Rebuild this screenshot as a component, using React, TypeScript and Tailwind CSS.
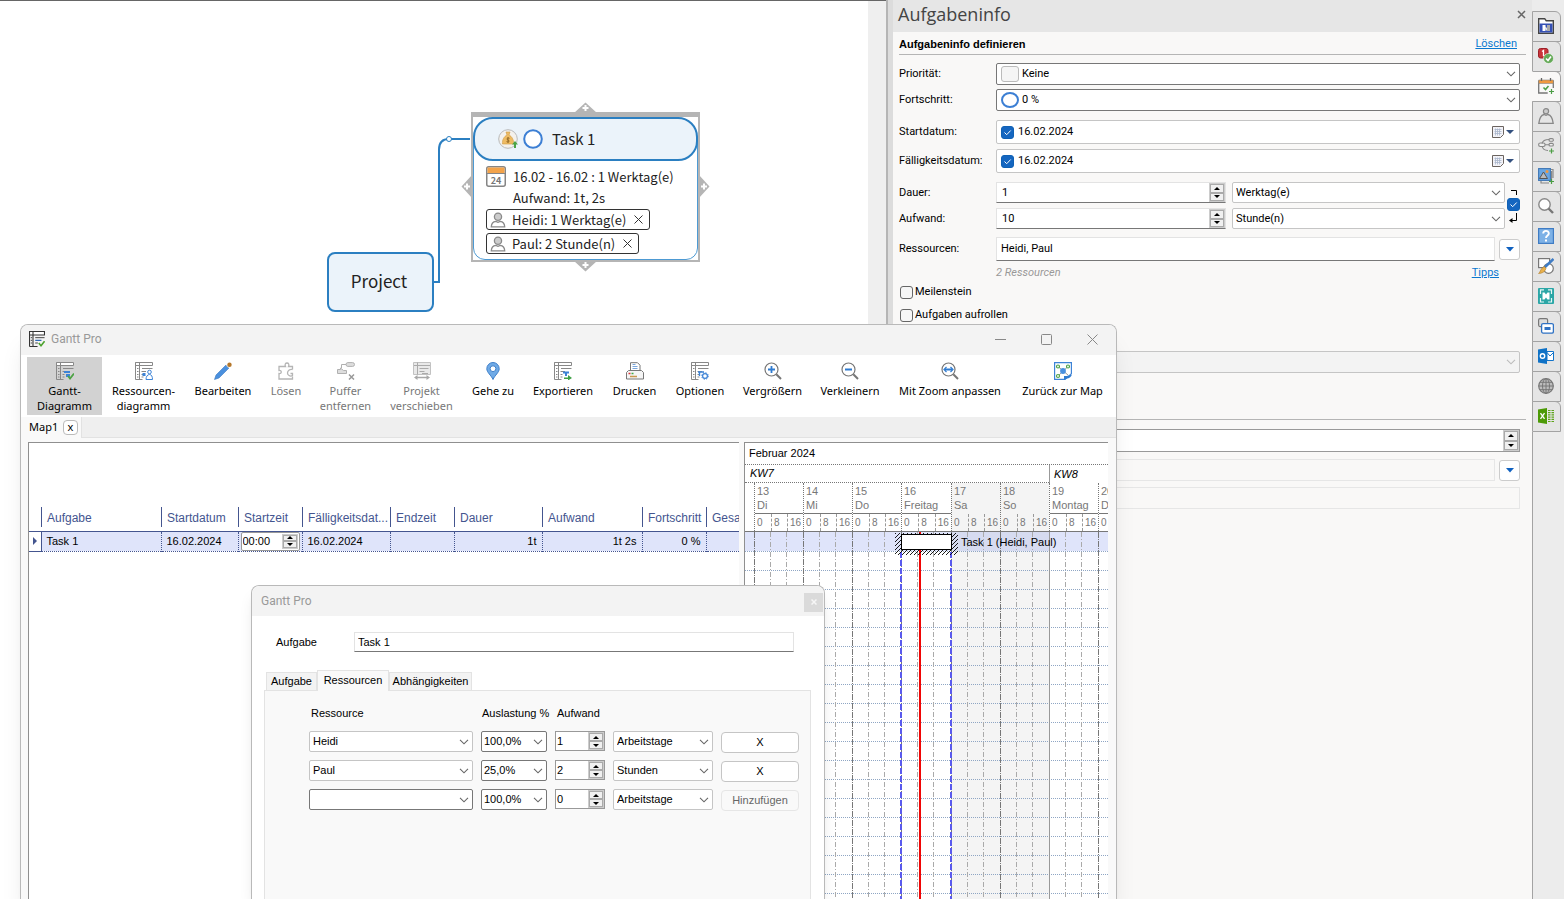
import React from "react";
import clsx from "clsx";

/* ---------- small shared controls ---------- */

const Chevron = ({ className, dim }: { className?: string; dim?: boolean }) => (
  <svg viewBox="0 0 10 6" className={clsx("pointer-events-none absolute top-1/2 h-[6px] w-[10px] -translate-y-1/2", className)}>
    <path d="M1 .8 5 4.8 9 .8" fill="none" stroke={dim ? "#bbb" : "#666"} strokeWidth="1.1" />
  </svg>
);

interface SelectBoxProps {
  label: string;
  value: string;
  className?: string;
  boxClass?: string;
  disabled?: boolean;
  children?: React.ReactNode;
}

const SelectBox = ({ label, value, className, boxClass, disabled, children }: SelectBoxProps) => (
  <div className={clsx("relative", className)}>
    <select
      aria-label={label}
      disabled={disabled}
      defaultValue={value}
      className={clsx("block h-full w-full appearance-none rounded-xs border pr-5", boxClass)}
    >
      <option value={value}>{value}</option>
    </select>
    {children}
    <Chevron className="right-1" dim={disabled} />
  </div>
);

const Spinner = ({ className }: { className?: string }) => (
  <div className={clsx("flex w-4 shrink-0 flex-col bg-[#ccc] p-px", className)}>
    <button aria-label="Mehr" className="flex flex-1 items-center justify-center border border-[#aaa] bg-[#f0f0f0]">
      <svg viewBox="0 0 6 3" className="h-[3px] w-[6px]"><path d="M0 3 3 0l3 3z" /></svg>
    </button>
    <button aria-label="Weniger" className="flex flex-1 items-center justify-center border border-[#aaa] bg-[#f0f0f0]">
      <svg viewBox="0 0 6 3" className="h-[3px] w-[6px]"><path d="M0 0h6L3 3z" /></svg>
    </button>
  </div>
);

const CheckBox = ({ id, label, checked }: { id?: string; label?: string; checked?: boolean }) => (
  <span className="relative block size-[13px] shrink-0">
    <input
      id={id}
      aria-label={label}
      type="checkbox"
      defaultChecked={checked}
      className="block size-[13px] appearance-none rounded-[3px] border border-[#666] bg-[#f6f6f6] checked:border-[#0f61b5] checked:bg-[#1566c0]"
    />
    {checked && (
      <svg viewBox="0 0 13 13" className="pointer-events-none absolute inset-0 size-[13px]">
        <path d="M3.5 6.5 5.7 8.7 9.7 4.5" fill="none" stroke="#fff" />
      </svg>
    )}
  </span>
);

/* ---------- mind map ---------- */

const PersonIcon = () => (
  <svg viewBox="0 0 16 16" className="size-4 shrink-0">
    <circle cx="8" cy="4.7" r="3.6" fill="#ccc" stroke="#8a8a8a" strokeWidth="1.3" />
    <path d="M1.3 14.8c.2-4 3-5.2 4.5-5.4l2.2 1 2.2-1c1.5.2 4.3 1.4 4.5 5.4z" fill="#fff" stroke="#8a8a8a" strokeWidth="1.3" />
  </svg>
);

const Chip = ({ text }: { text: string }) => (
  <div className="flex h-[21px] items-center rounded-[3px] border border-[#333] bg-white pl-[3px]">
    <PersonIcon />
    <span className="ml-1.5">{text}</span>
    <button aria-label="Entfernen" className="ml-1 mr-0.5 p-1">
      <svg viewBox="0 0 9 9" className="size-[9px]"><path d="M.5.5l8 8M8.5.5l-8 8" stroke="#333" fill="none" /></svg>
    </button>
  </div>
);

const Plus = ({ x, y }: { x: number; y: number }) => (
  <path d={`M${x - 3} ${y}h6M${x} ${y - 3}v6`} stroke="#fff" strokeWidth="2" />
);

const MapCanvas = () => (
  <main className="relative min-w-0 flex-1 overflow-hidden border-t border-[#666] bg-white font-['Noto_Sans_CJK_SC','Noto_Sans',sans-serif] text-[#222]">
    <svg className="absolute left-0 top-[-1px] h-[330px] w-[800px]" viewBox="0 0 800 330">
      <path d="M433 282h6v-132.500q0-10.500 10-10.500h21" fill="none" stroke="#2b7fc1" strokeWidth="2" />
      <circle cx="449" cy="139" r="2.5" fill="#fff" stroke="#2b7fc1" />
      <path d="M574 113 585.500 102.500 597 113zM574 261 585.500 271.500 597 261zM472 175 461.500 186.500 472 198zM699 175 709.500 186.500 699 198z" fill="#b5b5b5" />
      <Plus x={585.5} y={108} />
      <Plus x={585.5} y={265} />
      <Plus x={467} y={186.5} />
      <Plus x={704} y={186.5} />
    </svg>

    <div className="absolute left-[327px] top-[251px] flex h-[60px] w-[107px] items-center justify-center rounded-lg border-2 border-[#2b7fc1] bg-[#ebf3fa] pb-0.5 pr-[3px] text-[17px] leading-5">
      Project
    </div>

    <div className="absolute left-[471px] top-[111px] w-[229px] border-2 border-t-[5px] border-[#b5b5b5] bg-white">
      <div className="rounded-t-3xl rounded-b-xl border border-[#4d9ad3]">
        <div className="-mx-px -mt-px flex h-11 items-center rounded-[20px] border-2 border-[#2b7fc1] bg-[#ebf3fa] pl-[23px] text-[15px] leading-5">
          <svg viewBox="0 0 20 20" className="size-5">
            <circle cx="10" cy="10" r="9.3" fill="#f4f1ec" stroke="#b9b9b9" />
            <path d="M8 3h4l-1 3c3 1.5 5 5 4.5 9H4.500C4 11 6 7.5 9 6z" fill="#eebb63" stroke="#cf9a41" strokeWidth=".6" />
            <path d="M11.5 9.300c-2.500-1-3.500 1.200-1.500 1.700s1.500 2.700-1.500 1.600M10 8v6" fill="none" stroke="#8f6420" strokeWidth=".9" />
            <path d="M17 12l3 3.500h-2V19h-2v-3.500h-2z" fill="#4ba446" />
          </svg>
          <svg viewBox="0 0 20 20" className="ml-[5px] size-5"><circle cx="10" cy="10" r="8.8" fill="#fff" stroke="#3c7fd4" strokeWidth="2" /></svg>
          <span className="ml-[9px]">Task 1</span>
        </div>
        <div className="px-3 pb-[5px] pt-[5px] text-[13px] leading-[21px]">
          <div className="flex items-center">
            <svg viewBox="0 0 20 21" className="h-[21px] w-5">
              <rect x=".75" y=".75" width="18.5" height="19.5" rx="2" fill="#fff" stroke="#858585" strokeWidth="1.5" />
              <path d="M1.500 1.500h17V7h-17z" fill="#f3a34a" />
              <path d="M1 7.500h18" stroke="#858585" />
              <text x="10" y="17.5" fontSize="9" fontWeight="700" textAnchor="middle" fill="#777">24</text>
            </svg>
            <span className="ml-[7px]">16.02 - 16.02 : 1 Werktag(e)</span>
          </div>
          <div className="ml-[27px]">Aufwand: 1t, 2s</div>
          <div className="mt-px flex flex-col items-start gap-[3px] leading-4">
            <Chip text="Heidi: 1 Werktag(e)" />
            <Chip text="Paul: 2 Stunde(n)" />
          </div>
        </div>
      </div>
    </div>
  </main>
);

/* ---------- task info panel ---------- */

const PanelRow = ({ label, id, className, children }: { label: string; id?: string; className?: string; children: React.ReactNode }) => (
  <div className={clsx("flex items-center", className)}>
    <label htmlFor={id} className="w-[97px] shrink-0">{label}</label>
    {children}
  </div>
);

const DateBox = ({ id, label }: { id: string; label: string }) => (
  <div className="flex h-6 flex-1 items-center rounded-xs border border-[#c5c5c5] bg-white pl-1 pr-[5px]">
    <CheckBox checked label={`${label} aktiv`} />
    <input id={id} defaultValue="16.02.2024" className="ml-1 min-w-0 flex-1" />
    <button aria-label={`${label} wählen`} className="flex items-center gap-0.5">
      <svg viewBox="0 0 12 12" className="size-3">
        <path d="M.5.5h11v8l-3 3h-8z" fill="#f3f3f8" stroke="#6b6460" />
        <path d="M2.500 3.500h7M2.500 5.500h7M2.500 7.500h7M3.500 2.500v7M5.500 2.500v7M7.500 2.500v7" stroke="#a9b6cc" strokeWidth=".8" />
      </svg>
      <svg viewBox="0 0 8 4" className="h-1 w-2"><path d="M0 0h8L4 4z" fill="#33507f" /></svg>
    </button>
  </div>
);

const NumberBox = ({ id, value }: { id: string; value: string }) => (
  <div className="flex h-[21px] w-[230px] shrink-0 border border-[#e3e3e3] border-b-[#777] bg-white">
    <input id={id} defaultValue={value} className="min-w-0 flex-1 pl-[5px]" />
    <Spinner />
  </div>
);

const DropButton = () => (
  <button aria-label="Auswählen" className="ml-1 flex h-[21px] w-[21px] shrink-0 items-center justify-center rounded-[3px] border border-[#ccc] bg-white">
    <svg viewBox="0 0 8 5" className="h-[5px] w-2"><path d="M0 0h8L4 4.500z" fill="#0f61c0" /></svg>
  </button>
);

const TaskPanel = () => (
  <aside className="flex w-[639px] shrink-0 flex-col bg-[#f9f8f7] font-[Roboto,sans-serif] text-[11px] leading-4 text-black">
    <header className="flex h-8 shrink-0 items-center justify-between bg-[#e6e6e6] pb-1 pl-[5px] pr-1.5">
      <h1 className="font-['Open_Sans',sans-serif] text-[18px] text-[#444]">Aufgabeninfo</h1>
      <button aria-label="Schließen">
        <svg viewBox="0 0 9 9" className="size-[9px]"><path d="M1 1l7 7M8 1 1 8" stroke="#666" strokeWidth="1.5" /></svg>
      </button>
    </header>
    <div className="mx-1.5 flex h-[23px] shrink-0 items-end justify-between border-b border-[#b5b5b5] pb-0.5 pr-[9px]">
      <h2 className="font-['Liberation_Sans',Arial,sans-serif] font-bold">Aufgabeninfo definieren</h2>
      <a href="#" className="text-[#0b78d0] underline">Löschen</a>
    </div>
    <div className="flex flex-col pl-1.5 pr-3">
      <PanelRow label="Priorität:" className="mt-2">
        <SelectBox label="Priorität" value="Keine" className="h-[22px] flex-1" boxClass="border-[#777] bg-white pl-[25px]">
          <span className="absolute left-[5px] top-[3px] h-4 w-[18px] rounded-[3px] border border-[#bbb] bg-[#f5f5f5]" />
        </SelectBox>
      </PanelRow>
      <PanelRow label="Fortschritt:" className="mt-1">
        <SelectBox label="Fortschritt" value="0 %" className="h-[22px] flex-1" boxClass="border-[#777] bg-white pl-[25px]">
          <span className="absolute left-[5px] top-[3px] h-4 w-[18px] rounded-[50%] border-2 border-[#3c7fd4] bg-white" />
        </SelectBox>
      </PanelRow>
      <PanelRow label="Startdatum:" id="start" className="mt-[9px]">
        <DateBox id="start" label="Startdatum" />
      </PanelRow>
      <PanelRow label="Fälligkeitsdatum:" id="due" className="mt-[5px]">
        <DateBox id="due" label="Fälligkeitsdatum" />
      </PanelRow>
      <div className="relative mt-[9px] pr-[15px]">
        <PanelRow label="Dauer:" id="dauer">
          <NumberBox id="dauer" value="1" />
          <SelectBox label="Einheit Dauer" value="Werktag(e)" className="ml-1.5 h-[21px] flex-1" boxClass="border-[#c5c5c5] bg-white pl-[3px]" />
        </PanelRow>
        <PanelRow label="Aufwand:" id="aufwand" className="mt-[5px]">
          <NumberBox id="aufwand" value="10" />
          <SelectBox label="Einheit Aufwand" value="Stunde(n)" className="ml-1.5 h-[21px] flex-1" boxClass="border-[#c5c5c5] bg-white pl-[3px]" />
        </PanelRow>
        <div className="absolute right-0 top-[7px] flex w-[13px] flex-col items-center gap-0.5">
          <svg viewBox="0 0 13 7" className="h-[7px] w-[13px]"><path d="M4 1.500h5.500V6" fill="none" stroke="#000" /></svg>
          <CheckBox checked label="Dauer und Aufwand verknüpfen" />
          <svg viewBox="0 0 13 10" className="h-[10px] w-[13px]"><path d="M9.500 0v7.500H4" fill="none" stroke="#000" /><path d="M2 7.500 5.500 5v5z" /></svg>
        </div>
      </div>
      <PanelRow label="Ressourcen:" id="res" className="mt-2">
        <input id="res" defaultValue="Heidi, Paul" className="h-6 min-w-0 flex-1 border border-[#e3e3e3] border-b-[#777] bg-white px-1 pb-0.5" />
        <DropButton />
      </PanelRow>
      <div className="ml-[97px] mr-[21px] mt-1 flex justify-between">
        <i className="text-[#999]">2 Ressourcen</i>
        <a href="#" className="text-[#0b78d0] underline">Tipps</a>
      </div>
      <div className="mt-[3px] flex items-center gap-0.5 pl-px">
        <CheckBox id="milestone" /><label htmlFor="milestone">Meilenstein</label>
      </div>
      <div className="mt-[7px] flex items-center gap-0.5 pl-px">
        <CheckBox id="rollup" /><label htmlFor="rollup">Aufgaben aufrollen</label>
      </div>
      <SelectBox disabled label="Kalender" value="" className="ml-[97px] mt-[28px] h-[22px]" boxClass="border-[#c5c5c5] bg-[#f3f3f3]" />
    </div>
    <div className="mx-1.5 mt-[46px] border-b border-[#b5b5b5]" />
    <div className="flex flex-col pl-[103px] pr-3">
      <div className="mt-[9px] flex h-[23px] border border-[#999] bg-white">
        <input aria-label="Kosten" className="min-w-0 flex-1" />
        <Spinner />
      </div>
      <div className="mt-[7px] flex items-center">
        <input aria-label="Kostenart" disabled className="h-[22px] min-w-0 flex-1 border border-[#e6e6e6]" />
        <DropButton />
      </div>
      <input aria-label="Summe" disabled className="mt-1.5 h-[22px] border border-[#e6e6e6]" />
    </div>
  </aside>
);

/* ---------- side tabs ---------- */

const sideTabs: { name: string; icon: React.ReactNode }[] = [
  { name: "Bibliothek", icon: <><path d="M.7 15.300V.7h6l1.500 2h7.100v12.600z" fill="#fff" stroke="#444" strokeWidth="1.4" /><path d="M1.500 5.500h13v9h-13z" fill="#3550b5" /><path d="M4.500 7h3v6h-3z" fill="#fff" /><path d="M9 7h3v6H9z" fill="#aaa" /><path d="M7 8.500 9 10v3L7 11z" fill="#e5e5e5" /></> },
  { name: "Marker", icon: <><rect x=".5" y=".5" width="9.500" height="9.500" rx="2" fill="#c9353b" stroke="#9c2027" /><path d="M4 3.500 5.500 2.500v5.500" stroke="#fff" fill="none" strokeWidth="1.3" /><circle cx="10.500" cy="10.500" r="5" fill="#64a957" stroke="#fff" strokeWidth=".6" /><path d="M8 10.500l2 2 3-4" fill="none" stroke="#fff" strokeWidth="1.6" /></> },
  { name: "Aufgabeninfo", icon: <><path d="M.7 2.500V15h9" fill="none" stroke="#777" strokeWidth="1.3" /><path d="M15.300 2.500V10" stroke="#777" strokeWidth="1.3" /><path d="M.7 2h14.600v3.500H.7z" fill="#f0993d" stroke="#888" strokeWidth=".6" /><path d="M3.500 0v3M12.500 0v3" stroke="#666" strokeWidth="1.3" /><path d="M5.500 9.500l2 2 3-3.500" fill="none" stroke="#4c9e45" strokeWidth="1.6" /><path d="M13.500 11v5M11 13.500h5" stroke="#4c9e45" strokeWidth="1.2" /></> },
  { name: "Ressourcen", icon: <><circle cx="8" cy="3.2" r="2.6" fill="#ccc" stroke="#888" strokeWidth="1.2" /><path d="M.8 15.300C1.500 9.500 4 7 6 6.500l2 .8 2-.8c2 .5 4.500 3 5.200 8.800z" fill="none" stroke="#888" strokeWidth="1.3" /></> },
  { name: "Zweige", icon: <><g fill="#eee" stroke="#888" strokeWidth="1.1"><rect x=".6" y="5" width="6.500" height="3.500" rx="1.700" /><path d="M7 6.700h4M4 5.500q1-4 7-4M4 8q1 4.500 6 4.500" fill="none" /><rect x="11" y=".6" width="4.400" height="2.600" rx="1.300" /><rect x="11" y="5.400" width="4.400" height="2.600" rx="1.300" /></g><path d="M13.500 10.500v5M11 13h5" stroke="#4c9e45" strokeWidth="1.2" /></> },
  { name: "Bilder", icon: <><path d="M13 1.500h2V10M3 13v2h8M13.500 3V11" fill="none" stroke="#888" strokeWidth="1.2" /><rect x=".6" y=".6" width="11.800" height="11.800" fill="#69a6e3" stroke="#3f77b5" strokeWidth="1.1" /><path d="M1.500 10.500 5.500 4l4 6.500z" fill="#bbb" stroke="#555" /><circle cx="9" cy="3.500" r="1.500" fill="#f0993d" /><path d="M13.500 11v5M11 13.500h5" stroke="#4c9e45" strokeWidth="1.2" /></> },
  { name: "Suche", icon: <><circle cx="6.500" cy="6.500" r="5.700" fill="#fdfdfd" stroke="#888" strokeWidth="1.4" /><path d="M10.500 10.500 15 15" stroke="#777" strokeWidth="2.4" /></> },
  { name: "Hilfe", icon: <><rect x=".6" y=".6" width="14.800" height="14.800" fill="#7db1e6" stroke="#3f7cc4" strokeWidth="1.2" /><path d="M5.200 5.500c0-3.500 5.600-3.500 5.600 0 0 2-2.800 2-2.800 4.500" fill="none" stroke="#fff" strokeWidth="1.9" /><path d="M7 11.500h2v2H7z" fill="#fff" /></> },
  { name: "Stile", icon: <><rect x=".6" y=".6" width="11" height="9" fill="#fff" stroke="#777" strokeWidth="1.2" /><circle cx="10.500" cy="10.500" r="4.800" fill="#fff" stroke="#777" strokeWidth="1.2" /><path d="M15.500 1 6.500 9.500" stroke="#3f7cc4" strokeWidth="2.6" /><path d="M6.500 8.500 8 10.500C7 14 4 15.500.5 15.500c2-1.500 2-5.500 6-7z" fill="#e8b04b" stroke="#a87422" strokeWidth=".5" /></> },
  { name: "Snap", icon: <><rect width="16" height="16" rx="1" fill="#2ba6a6" /><path d="M6 1.800H2.500V6M10 1.800h3.500V6M13.500 10v4H10M6 14H2.500v-4" fill="none" stroke="#e6f6f6" strokeWidth="1.2" /><path d="M4.500 4.500h2l1.500 2 1.500-2h2v7h-2l-1.500-2-1.500 2h-2z" fill="#fff" /></> },
  { name: "Fenster", icon: <><rect x=".6" y=".6" width="9" height="8" rx="1.500" fill="#ddd" stroke="#777" strokeWidth="1.2" /><rect x="3.600" y="5.600" width="11.800" height="9.500" rx="1.500" fill="#fff" stroke="#2f72c4" strokeWidth="1.3" /><path d="M6.500 9h6v3h-6z" fill="#2f72c4" /></> },
  { name: "Outlook", icon: <><path d="M9 3.500h6.500v9H9z" fill="#fff" stroke="#1273c9" /><path d="M9 4.500 12 8l3.500-3.500" fill="none" stroke="#1273c9" /><path d="M0 1.500 9 0v16l-9-1.500z" fill="#0f72c6" /><circle cx="4.500" cy="8" r="2.200" fill="none" stroke="#fff" strokeWidth="1.4" /></> },
  { name: "Web", icon: <><circle cx="8" cy="8" r="7.300" fill="#bdbdbd" stroke="#777" strokeWidth="1.2" /><path d="M.7 8h14.600M8 .7v14.600M2 4.300h12M2 11.700h12" stroke="#777" fill="none" /><ellipse cx="8" cy="8" rx="3.500" ry="7.300" fill="none" stroke="#777" /></> },
  { name: "Excel", icon: <><path d="M0 1.500 9 0v16l-9-1.500z" fill="#4c9a06" /><path d="M2.500 5.200 6.500 10.800M6.500 5.200 2.500 10.800" stroke="#fff" strokeWidth="1.3" /><path d="M10 2.500h6M10 4.700h6M10 6.900h6M10 9.100h6M10 11.300h6M10 13.500h6" stroke="#5da319" strokeWidth="1.2" strokeDasharray="2.500 1" /></> },
];

const SideTabs = () => (
  <nav className="flex w-8 shrink-0 flex-col bg-[#ececec] pt-[11px]">
    {sideTabs.map((tab) => (
      <button
        key={tab.name}
        aria-label={tab.name}
        className={clsx(
          "-mb-px mr-[3px] flex h-[31px] items-center justify-center rounded-tr-md border border-[#a3a3a3] pb-0.5 pr-0.5",
          tab.name === "Aufgabeninfo" ? "border-l-transparent bg-[#f9f8f7]" : "bg-[#e5e5e5]"
        )}
      >
        <svg viewBox="0 0 16 16" className="size-4">{tab.icon}</svg>
      </button>
    ))}
    <div className="mt-px flex-1 border-l border-[#a3a3a3]" />
  </nav>
);

/* ---------- Gantt window ---------- */

const SheetIcon = ({ dim, children }: { dim?: boolean; children?: React.ReactNode }) => (
  <svg viewBox="0 0 18 18" className="size-[18px]">
    <path d="M.5.5h17v3H.5z" fill={dim ? "#eee" : "#fff"} stroke={dim ? "#bbb" : "#888"} />
    <path d="M.5.5V17.500M4.500.5v17M.5 17.500h7M7 6.500h10.500M2 6.500h1.500M2 9.500h1.500M2 12.500h1.500M2 15h1.500M6.500 9.500H11M6.500 12.500h2M6.500 15h2" fill="none" stroke={dim ? "#bbb" : "#888"} />
    {children}
  </svg>
);

const Lens = ({ children }: { children: React.ReactNode }) => (
  <svg viewBox="0 0 18 18" className="size-[18px]">
    <circle cx="7.500" cy="7.500" r="6.500" fill="#fff" stroke="#777" strokeWidth="1.2" />
    <path d="M12.300 12.300 17 17" stroke="#777" strokeWidth="2" />
    <g stroke="#2f7bd0" strokeWidth="1.8" fill="none">{children}</g>
  </svg>
);

const tools: { lines: string[]; active?: boolean; disabled?: boolean; icon: React.ReactNode }[] = [
  { lines: ["Gantt-", "Diagramm"], active: true, icon: <SheetIcon><path d="M8 9h6v2H8zM10 12h4v3h-4z" fill="#3d83d6" /><path d="M12 14l2 2.500 4-5" fill="none" stroke="#4ea345" strokeWidth="1.8" /></SheetIcon> },
  { lines: ["Ressourcen-", "diagramm"], icon: <SheetIcon><path d="M7.500 11h3v3h-3z" fill="#3d83d6" /><circle cx="14.500" cy="10" r="1.800" fill="#fff" stroke="#3d83d6" /><path d="M11 17.500c0-3 1.500-5 3.500-5s3 2 3 5z" fill="#fff" stroke="#3d83d6" /></SheetIcon> },
  { lines: ["Bearbeiten"], icon: <svg viewBox="0 0 18 18" className="size-[18px]"><path d="M.5 17.500 2 13 12 3l3 3L5 16z" fill="#4a90de" stroke="#3a79c2" strokeWidth=".6" /><path d="M12 3.500 13 2.500l2.500 2.500-1 1z" fill="#ddd" /><circle cx="15.500" cy="2.700" r="2.200" fill="#b5772a" /></svg> },
  { lines: ["Lösen"], disabled: true, icon: <svg viewBox="0 0 18 18" className="size-[18px]"><path d="M15.500 7.500V4.500h-4c1-2 0-3.500-1.500-3.500S7.500 2.500 8.500 4.500h-6.500v4c3-.8 3 3.800 0 3v5.500h13.500v-2.500M15.500 7.500c-3-.5-5 1.500-5 3.500s2.500 4 5 2.500v-2h-2" fill="none" stroke="#b5b5b5" strokeWidth="1.3" /></svg> },
  { lines: ["Puffer", "entfernen"], disabled: true, icon: <svg viewBox="0 0 18 18" className="size-[18px]"><g fill="#ddd" stroke="#b0b0b0"><rect x="9" y=".6" width="8.500" height="3.800" rx="1.900" /><path d="M.5 7.500h3V6l3 2.500h3v3h-9z" /><path d="M9 2.500H4.500V6" fill="none" /></g><path d="M12 12.500l5 5M17 12.500l-5 5" stroke="#999" strokeWidth="1.5" /></svg> },
  { lines: ["Projekt", "verschieben"], disabled: true, icon: <svg viewBox="0 0 18 18" className="size-[18px]"><path d="M.5.5h17v12H.5z" fill="#e9e9e9" stroke="#c2c2c2" /><path d="M1 3.500h16M4.500.5v12M6.500 6.500h9M6.500 9.500h5M9 11.500h6" stroke="#aaa" fill="none" /><path d="M1 15.500 4.500 13v1.800h9V13l3.500 2.500-3.500 2.500v-1.800h-9V18z" fill="#a8a8a8" /></svg> },
  { lines: ["Gehe zu"], icon: <svg viewBox="0 0 18 18" className="size-[18px]"><path d="M9 17.500C7 13 2.800 10.500 2.800 6.700a6.200 6.200 0 0 1 12.400 0C15.200 10.500 11 13 9 17.500z" fill="#6faae6" stroke="#3f7fc9" /><circle cx="9" cy="6.700" r="2.900" fill="#fff" stroke="#3f7fc9" /></svg> },
  { lines: ["Exportieren"], icon: <SheetIcon><path d="M9 9.500h6v2H9zM11 11h2v3h-2z" fill="#3d83d6" /><path d="M10 15.500h4v-2.500l4 3-4 2.500v-1.500h-4z" fill="#3fa046" /></SheetIcon> },
  { lines: ["Drucken"], icon: <svg viewBox="0 0 18 18" className="size-[18px]"><path d="M4.500 8.500V.7h7l2.500 2.500v5.300" fill="#fff" stroke="#777" /><path d="M6.500 2.500h3M6.500 4.500h5M6.500 6.500h5" stroke="#7aa7dd" /><path d="M2.500 8.500h13l2 2v6.500H.5v-6.500z" fill="#f5f5f5" stroke="#777" /><path d="M2.500 11.500h2" stroke="#d33" strokeWidth="1.4" /><path d="M5.500 11.500h2" stroke="#4a4" strokeWidth="1.4" /><path d="M4 14.500h7" stroke="#c9974e" strokeWidth="1.4" /></svg> },
  { lines: ["Optionen"], icon: <SheetIcon><path d="M7 10h6M8.500 10v4" stroke="#3d83d6" strokeWidth="1.4" /><circle cx="14" cy="14" r="2.400" fill="#fff" stroke="#3d83d6" strokeWidth="1.2" /><circle cx="14" cy="14" r="3.300" fill="none" stroke="#3d83d6" strokeDasharray="1.300 1.300" /></SheetIcon> },
  { lines: ["Vergrößern"], icon: <Lens><path d="M4 7.500h7M7.500 4v7" /></Lens> },
  { lines: ["Verkleinern"], icon: <Lens><path d="M4 7.500h7" /></Lens> },
  { lines: ["Mit Zoom anpassen"], icon: <Lens><path d="M4 7.500h7" /><path d="M5.500 5 3 7.500 5.500 10M9.500 5 12 7.500 9.500 10" strokeWidth="1.2" /></Lens> },
  { lines: ["Zurück zur Map"], icon: <svg viewBox="0 0 18 18" className="size-[18px]"><path d="M.6.6h16.800v11L11 17.400H.6z" fill="#fff" stroke="#3d83d6" strokeWidth="1.2" /><path d="M4 4.500 14 13M14 4.500 4 14" stroke="#999" /><g fill="#fff" stroke="#4ea345" strokeWidth="1.2"><circle cx="4" cy="4.500" r="1.500" /><circle cx="14" cy="4.500" r="1.500" /><circle cx="4" cy="14" r="1.500" /></g><circle cx="9" cy="9" r="2.900" fill="#4a90de" /><path d="M10 18v-4l2.500 0C14.500 14 15.500 13 18 12.500c-1 2.500-3 4-5 4z" fill="#2f7bd0" /></svg> },
];

const columns = [
  { name: "Aufgabe", value: "Task 1" },
  { name: "Startdatum", value: "16.02.2024" },
  { name: "Startzeit", value: "00:00" },
  { name: "Fälligkeitsdat...", value: "16.02.2024" },
  { name: "Endzeit", value: "" },
  { name: "Dauer", value: "1t", right: true },
  { name: "Aufwand", value: "1t 2s", right: true },
  { name: "Fortschritt", value: "0 %", right: true },
  { name: "Gesamt", value: "" },
];

const TaskTable = () => (
  <div className="min-w-0 flex-1 overflow-hidden border-l border-t border-[#8f8f8f] bg-white">
    <table className="w-full table-fixed border-collapse">
      <colgroup>
        <col className="w-[12px]" />
        <col className="w-[120px]" />
        <col className="w-[77px]" />
        <col className="w-[64px]" />
        <col className="w-[88px]" />
        <col className="w-[64px]" />
        <col className="w-[88px]" />
        <col className="w-[100px]" />
        <col className="w-[64px]" />
        <col />
      </colgroup>
      <thead>
        <tr className="h-[88px] border-b border-[#44558f] align-bottom text-xs text-[#44558f]">
          <th />
          {columns.map((c) => (
            <th key={c.name} className="overflow-hidden whitespace-nowrap pb-1 text-left font-normal">
              <div className="h-5 border-l border-[#44558f] pl-[5px] leading-[22px]">{c.name}</div>
            </th>
          ))}
        </tr>
      </thead>
      <tbody>
        <tr className="h-5 border-b border-dotted border-[#44558f] bg-[#dfe4fa]">
          <td className="border-b border-r border-solid border-[#44558f] bg-white pl-1">
            <svg viewBox="0 0 4 8" className="h-2 w-1"><path d="M0 0l4 4-4 4z" fill="#44558f" /></svg>
          </td>
          {columns.map((c) => (
            <td key={c.name} className={clsx("border-l border-dotted border-[#44558f] px-[5px] leading-4", c.right && "text-right")}>
              {c.name === "Startzeit" ? (
                <div className="-mx-[3px] flex h-[19px] rounded-xs border border-[#999] bg-white p-px">
                  <input aria-label="Startzeit" defaultValue={c.value} className="min-w-0 flex-1" />
                  <Spinner />
                </div>
              ) : (
                c.value
              )}
            </td>
          ))}
        </tr>
      </tbody>
    </table>
  </div>
);

const days = [
  { day: "13", name: "Di", x: 9 },
  { day: "14", name: "Mi", x: 58 },
  { day: "15", name: "Do", x: 107 },
  { day: "16", name: "Freitag", x: 156, wide: true },
  { day: "17", name: "Sa", x: 206, weekend: true },
  { day: "18", name: "So", x: 255, weekend: true },
  { day: "19", name: "Montag", x: 304 },
  { day: "20", name: "Di", x: 353 },
];

const rowY = Array.from({ length: 19 }, (_, i) => 20 + i * 19);

const Timeline = () => (
  <div className="relative flex w-[364px] shrink-0 flex-col overflow-hidden border-l border-t border-[#8f8f8f] bg-white">
    <div className="h-[22px] shrink-0 border-b border-dotted border-[#777] pl-1 leading-[21px]">Februar 2024</div>
    <div className="flex h-[18px] shrink-0 text-[11px] italic leading-4">
      <div className="w-[304px] shrink-0 border-b border-dotted border-[#777] pl-[5px]">KW7</div>
      <div className="flex-1 border-l border-[#999] pl-1 leading-[18px]">KW8</div>
    </div>
    <div className="flex h-[49px] shrink-0 border-b border-[#777] text-[#777]">
      <div className="w-[9px] shrink-0" />
      {days.map((d) => (
        <div key={d.day} className={clsx("shrink-0 border-l border-dotted border-[#777]", d.wide ? "w-[50px]" : "w-[49px]", d.weekend && "bg-[#f4f4f4]")}>
          <div className={clsx("h-[31px] pl-0.5 pt-px leading-[14px]", !d.weekend && "border-b border-[#777]")}>
            <div>{d.day}</div>
            <div>{d.name}</div>
          </div>
          <div className="grid grid-cols-3 text-[10px] leading-[17px]">
            <span className="pl-0.5">0</span>
            <span className="border-l border-dashed border-[#999] pl-0.5">8</span>
            <span className="border-l border-dashed border-[#999] pl-0.5">16</span>
          </div>
        </div>
      ))}
    </div>
    <svg className="min-h-0 w-full flex-1" viewBox="0 0 363 367" preserveAspectRatio="xMinYMin slice">
      <defs>
        <pattern id="hatch" width="4" height="4" patternUnits="userSpaceOnUse">
          <path d="M-1 1 1-1M0 4 4 0M3 5 5 3" stroke="#000" strokeWidth=".9" />
        </pattern>
      </defs>
      <rect x="206" y="0" width="98" height="367" fill="#f4f4f4" />
      <rect x="0" y="0" width="363" height="19" fill="#dfe4fa" />
      <rect x="206" y="0" width="98" height="19" fill="#d6dbf0" />
      {rowY.map((y) => (
        <path key={y} d={`M0 ${y - 0.5}H363`} stroke="#8fa6c4" strokeDasharray="1 1" />
      ))}
      {days.map((d) => (
        <g key={d.day} fill="none">
          <path d={`M${d.x + 0.5} 0V367`} stroke="#777" strokeDasharray="6 1 1 1" />
          <path d={`M${d.x + 16.5} 0V367M${d.x + 32.5} 0V367`} stroke="#aaa" strokeDasharray="5 2 1 2" />
        </g>
      ))}
      <path d="M304.500 0V367" stroke="#999" />
      <path d="M156 20V367M206 20V367" stroke="#5a5aee" strokeWidth="2" strokeDasharray="6 2" />
      <path d="M175 0V367" stroke="#f00505" strokeWidth="2" />
      <path d="M150 1h63v22h-63z" fill="url(#hatch)" />
      <rect x="156.500" y="2.500" width="50" height="15" fill="#fff" stroke="#000" />
    </svg>
    <div className="absolute left-[216px] top-[91px] leading-4">Task 1 (Heidi, Paul)</div>
  </div>
);

const resources = [
  { name: "Heidi", load: "100,0%", effort: "1", unit: "Arbeitstage", action: "X" },
  { name: "Paul", load: "25,0%", effort: "2", unit: "Stunden", action: "X" },
  { name: "", load: "100,0%", effort: "0", unit: "Arbeitstage", action: "Hinzufügen" },
];

const TaskDialog = () => (
  <section className="absolute bottom-0 left-[230px] top-[260px] flex w-[574px] flex-col rounded-t-lg border border-b-0 border-[#b9b9b9] bg-white shadow-lg">
    <header className="flex h-[30px] shrink-0 items-center justify-between rounded-t-lg bg-[#f3f3f3] pl-[9px] pr-px">
      <span className="font-[Roboto,sans-serif] text-xs text-[#999]">Gantt Pro</span>
      <button aria-label="Schließen" className="mt-0.5 flex h-[19px] w-[19px] items-center justify-center bg-[#dadada]">
        <svg viewBox="0 0 6 6" className="size-1.5"><path d="M.5.5l5 5M5.500.5l-5 5" stroke="#f6f6f6" strokeWidth="1.5" /></svg>
      </button>
    </header>
    <div className="mr-[30px] mt-4 flex h-5 shrink-0 items-center pl-6">
      <label htmlFor="task-name" className="w-[78px]">Aufgabe</label>
      <input id="task-name" defaultValue="Task 1" className="h-5 min-w-0 flex-1 border border-[#e3e3e3] border-b-[#777] px-[3px]" />
    </div>
    <div className="ml-3.5 mt-[18px] flex h-5 shrink-0 items-end" role="tablist">
      <button role="tab" className="h-[18px] w-[51px] border border-b-0 border-[#e3e3e3] bg-[#f3f3f3]">Aufgabe</button>
      <button role="tab" aria-selected="true" className="relative z-10 -mb-px h-[21px] w-[72px] border border-b-0 border-[#e3e3e3] bg-[#f9f9f9] pb-0.5">Ressourcen</button>
      <button role="tab" className="h-[18px] w-[83px] border border-b-0 border-[#e3e3e3] bg-[#f3f3f3]">Abhängigkeiten</button>
    </div>
    <div className="ml-3 mr-[13px] flex-1 border border-b-0 border-[#e3e3e3] bg-[#f9f9f9] pl-11 pt-3.5">
      <div className="grid grid-cols-[164px_66px_50px_100px_78px] gap-x-2 whitespace-nowrap leading-4">
        <span className="pl-0.5">Ressource</span>
        <span className="pl-px">Auslastung %</span>
        <span className="pl-0.5">Aufwand</span>
      </div>
      <div className="mt-2.5 flex flex-col gap-2">
        {resources.map((r, i) => (
          <div key={i} className="grid h-[21px] grid-cols-[164px_66px_50px_100px_78px] gap-x-2">
            <SelectBox label="Ressource" value={r.name} className="h-[21px]" boxClass={clsx("bg-white pl-[3px]", r.name ? "border-[#c5c5c5]" : "border-[#777]")} />
            <SelectBox label="Auslastung" value={r.load} className="h-[21px]" boxClass="border-[#777] bg-white pl-0.5" />
            <div className="flex h-5 border border-[#999] bg-white">
              <input aria-label="Aufwand" defaultValue={r.effort} className="min-w-0 flex-1 pl-px" />
              <Spinner />
            </div>
            <SelectBox label="Einheit" value={r.unit} className="h-[21px]" boxClass="border-[#c5c5c5] bg-white pl-[3px]" />
            <button
              disabled={!r.name}
              className={clsx("mt-px h-[21px] rounded-sm border", r.name ? "border-[#c5c5c5] bg-white" : "border-[#e6e6e6] bg-[#f9f9f9] text-[#666]")}
            >
              {r.action}
            </button>
          </div>
        ))}
      </div>
    </div>
  </section>
);

const GanttWindow = () => (
  <section className="absolute bottom-0 left-5 right-[447px] top-[324px] flex flex-col overflow-hidden rounded-t-lg border border-b-0 border-[#b9b9b9] bg-[#f9f9f9] font-['Liberation_Sans',Arial,sans-serif] text-[11px] text-black shadow-xl">
    <header className="flex h-[30px] shrink-0 items-center bg-[#f3f3f3] pb-0.5 pl-2 pr-[18px]">
      <svg viewBox="0 0 18 18" className="size-4">
        <path d="M.6.6h16.800v4H.6zM.6.6v16.800M4.500.6v16.800M.6 17.400h9" fill="#fff" stroke="#333" strokeWidth="1.2" />
        <path d="M2 7.500h1.500M2 10.500h1.500M2 13.500h1.500M7 7.500h10.500M7 13.500h3" stroke="#333" />
        <path d="M7 10.500h7" stroke="#2f6bb8" strokeWidth="1.5" />
        <path d="M11 13.500l2.500 3 4-5" fill="none" stroke="#4ea330" strokeWidth="1.8" />
      </svg>
      <span className="ml-1.5 flex-1 font-[Roboto,sans-serif] text-xs text-[#999]">Gantt Pro</span>
      <div className="flex items-center gap-[35px] text-[#888]">
        <button aria-label="Minimieren"><svg viewBox="0 0 11 11" className="size-[11px]"><path d="M0 5.500h11" stroke="currentColor" /></svg></button>
        <button aria-label="Maximieren"><svg viewBox="0 0 11 11" className="size-[11px]"><rect x=".5" y=".5" width="10" height="10" rx="1" fill="none" stroke="currentColor" /></svg></button>
        <button aria-label="Schließen"><svg viewBox="0 0 11 11" className="size-[11px]"><path d="M.5.5l10 10M10.500.5l-10 10" stroke="currentColor" /></svg></button>
      </div>
    </header>

    <div className="grid h-[62px] shrink-0 grid-cols-[75px_83px_76px_50px_69px_83px_60px_80px_63px_68px_77px_78px_122px_103px] bg-white py-0.5 pl-1.5 font-['Noto_Sans',sans-serif] leading-[15px]">
      {tools.map((t) => (
        <button
          key={t.lines[0]}
          disabled={t.disabled}
          className={clsx("flex flex-col items-center whitespace-nowrap pt-[5px]", t.active && "bg-[#d2d2d2]", t.disabled && "text-[#777]")}
        >
          {t.icon}
          <span className="mt-[3px]">{t.lines[0]}</span>
          {t.lines[1] && <span>{t.lines[1]}</span>}
        </button>
      ))}
    </div>

    <div className="flex h-[21px] shrink-0 border-b border-[#e2e2e2] bg-[#efefef]">
      <div className="-mb-px flex w-[61px] items-center justify-between border-r border-[#e2e2e2] bg-[#f9f9f9] pl-2 pr-[3px] font-['Noto_Sans',sans-serif]">
        Map1
        <button aria-label="Map1 schließen" className="flex size-[15px] items-center justify-center rounded-sm border border-[#bbb] bg-white pb-0.5 leading-3">x</button>
      </div>
    </div>

    <div className="flex min-h-0 flex-1 gap-[5px] pl-[7px] pr-2 pt-1">
      <TaskTable />
      <Timeline />
    </div>

    <TaskDialog />
  </section>
);

export default function App() {
  return (
    <div className="relative flex h-screen overflow-hidden bg-white">
      <MapCanvas />
      <div className="w-[18px] shrink-0 border-t border-[#666] bg-[#efefef]" />
      <div className="w-[7px] shrink-0 border-l-2 border-[#b5b5b5] bg-[#dcdcdc]" />
      <TaskPanel />
      <SideTabs />
      <GanttWindow />
    </div>
  );
}
